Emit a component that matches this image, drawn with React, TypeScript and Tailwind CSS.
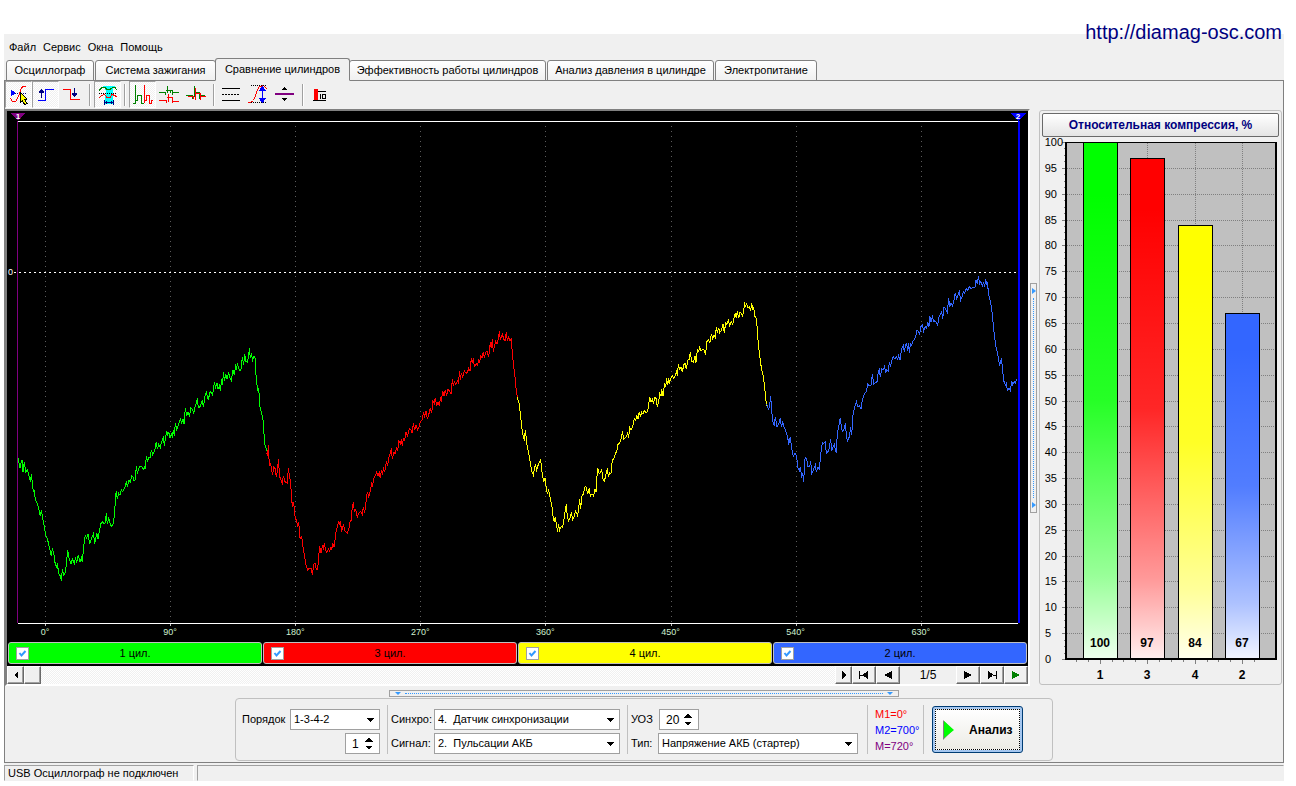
import type { ReactNode } from "react";

type Cylinder = {
  id: number;
  name: string;
  color: string;
  tone: string;
  value: number;
  origin: [number, number];
  trace: string;
};

// Traces are stored in third-pixel units relative to their own origin.
const cylinders: Cylinder[] = [
  {
    id: 1,
    name: "1 цил.",
    color: "#00ff00",
    tone: "bg-[#00ff00]",
    value: 100,
    origin: [-7, 219],
    trace:
      "54,385 57,400 60,415 63,400 66,390 69,425 73,395 77,425 82,420 86,432 91,455 94,433 100,485 103,483 106,508 113,525 118,545 121,558 124,540 128,565 133,590 137,615 143,630 148,652 154,678 157,655 162,675 166,705 170,712 172,700 176,730 181,738 184,752 187,718 191,735 195,730 199,705 203,660 208,688 213,703 217,687 223,700 226,685 230,697 235,675 240,695 244,683 247,697 251,650 256,615 259,625 264,613 269,643 275,625 280,612 284,638 287,630 290,608 294,628 299,598 303,580 308,576 312,580 316,578 319,549 322,583 326,565 332,585 335,590 340,580 344,550 346,505 349,483 352,508 356,490 360,495 364,480 368,485 372,478 376,468 379,453 382,470 387,450 391,456 395,438 399,440 402,452 406,450 409,408 412,432 416,415 420,410 425,409 430,417 433,411 436,418 439,377 443,395 447,380 450,385 454,360 458,374 464,363 469,335 472,358 476,343 481,352 485,335 490,323 493,347 497,320 500,303 503,315 506,305 510,325 514,313 517,320 520,300 523,318 526,280 530,298 535,285 541,267 545,278 549,268 552,282 556,235 560,258 564,246 569,258 572,233 577,238 581,250 585,230 589,220 592,205 595,233 600,230 607,210 610,232 615,198 619,187 625,210 630,185 635,190 638,195 643,157 647,172 651,160 654,178 658,168 661,182 665,148 668,165 670,127 674,152 677,132 681,148 686,127 690,145 694,153 699,120 703,135 707,103 710,120 712,98 716,115 720,122 724,115 727,80 731,105 734,73 738,95 742,97 746,80 748,55 751,85 754,70 758,90 762,78 765,85 769,150 773,180 776,175 780,230 785,250 789,270 791,300 795,345 800,360 802,365",
  },
  {
    id: 3,
    name: "3 цил.",
    color: "#ff0000",
    tone: "bg-[#ff0000]",
    value: 97,
    origin: [243, 209],
    trace:
      "50,400 53,405 55,375 58,435 62,430 65,450 68,465 71,440 75,445 79,470 83,450 85,418 89,470 93,480 97,490 100,468 105,485 112,490 115,445 118,465 122,490 125,540 128,562 131,545 134,585 140,605 143,620 146,605 150,655 155,650 159,680 164,710 168,735 173,750 178,745 184,745 187,765 191,733 195,730 199,748 203,748 206,710 209,678 213,700 217,678 220,685 223,670 227,692 231,697 236,687 239,693 243,680 245,690 248,668 253,682 257,640 262,620 266,603 269,615 271,603 275,635 280,615 286,635 292,640 297,625 300,605 304,600 306,570 310,545 313,575 317,568 322,592 326,580 332,575 337,583 340,560 344,580 348,545 352,515 356,530 361,513 365,490 368,497 371,475 376,467 380,457 384,467 388,457 391,475 394,450 398,465 400,440 404,457 409,425 413,435 417,410 421,400 424,385 427,418 431,398 436,400 440,380 443,393 447,362 451,370 454,358 457,377 460,355 464,362 468,335 472,350 478,325 483,330 487,340 490,310 494,330 498,315 503,330 508,318 512,303 517,300 520,277 524,290 528,273 532,295 536,285 541,263 545,280 549,242 553,250 556,233 560,257 564,245 568,257 571,235 574,242 578,213 582,228 586,210 590,228 594,208 600,215 603,223 607,178 610,197 613,185 617,193 620,188 622,182 626,190 628,154 631,180 634,160 638,172 643,152 648,160 653,155 656,145 660,152 664,115 667,130 670,115 673,140 679,130 683,137 686,117 689,130 692,105 696,115 700,95 703,115 707,98 711,93 716,110 721,67 724,85 727,58 730,95 734,75 737,65 741,72 745,58 748,33 751,60 757,42 761,57 765,62 769,37 772,62 776,50 780,62 784,58 787,100 791,140 795,170 799,215 803,232",
  },
  {
    id: 4,
    name: "4 цил.",
    color: "#ffff00",
    tone: "bg-[#ffff00]",
    value: 84,
    origin: [503, 179],
    trace:
      "22,322 27,340 31,370 35,410 40,440 43,452 46,420 51,465 57,495 62,525 66,545 70,555 76,523 80,540 86,520 92,508 96,545 101,577 105,563 109,595 112,612 116,600 121,625 126,650 130,685 133,695 136,680 139,705 143,725 145,703 149,720 153,710 158,712 163,680 169,643 172,680 176,692 180,683 184,667 188,688 193,678 197,663 203,678 206,655 209,628 212,658 215,620 220,612 225,590 229,592 233,612 238,595 241,618 246,612 251,618 255,598 258,607 260,570 263,533 267,550 271,548 275,540 279,567 283,573 287,558 292,535 295,560 299,548 303,550 307,510 312,505 317,490 321,480 324,463 328,460 331,453 335,440 337,423 341,448 346,443 350,440 353,427 356,443 359,413 363,420 368,410 373,385 377,392 380,375 384,388 388,365 391,380 395,367 399,372 403,362 408,367 413,365 416,345 419,322 423,335 427,327 430,342 434,322 438,325 442,352 446,335 449,310 453,318 455,298 459,318 464,280 467,292 470,265 473,285 476,265 479,277 483,265 487,257 491,265 495,258 499,245 502,257 505,223 509,237 513,230 517,247 521,225 525,220 529,238 533,210 538,208 541,187 545,213 550,217 555,197 558,218 562,180 566,185 569,172 573,182 578,178 583,180 587,195 590,155 595,150 600,157 604,132 608,145 612,135 616,142 619,112 622,128 626,113 629,128 634,122 639,103 643,128 647,98 651,103 655,92 659,107 664,95 668,103 672,85 676,70 679,85 682,62 686,85 690,65 695,72 698,78 702,55 703,37 706,50 710,42 714,53 718,50 722,62 725,40 729,60 731,50 734,78 738,85 742,115 745,165 750,205 755,240 760,260 764,290 767,325 770,345 772,345",
  },
  {
    id: 2,
    name: "2 цил.",
    color: "#3366ff",
    tone: "bg-[#3366ff]",
    value: 67,
    origin: [753, 149],
    trace:
      "20,433 26,448 29,435 32,408 35,455 39,485 43,497 46,470 51,500 56,492 61,473 64,500 68,487 72,500 78,515 83,530 86,555 91,530 95,565 100,590 105,580 110,590 114,625 118,633 121,622 125,648 128,640 131,665 134,605 136,590 141,603 144,620 149,620 152,602 155,640 160,630 166,615 169,637 174,620 178,627 182,585 187,548 191,550 196,545 199,580 204,575 208,563 212,538 215,572 219,560 223,552 227,573 229,575 232,520 236,502 241,473 244,502 247,513 252,508 256,490 260,535 263,542 268,530 272,500 275,525 279,465 283,445 289,425 293,440 298,437 303,447 307,420 310,410 315,400 319,395 323,372 328,378 333,375 337,343 341,372 346,368 351,365 354,342 358,325 361,352 365,327 370,328 374,318 377,340 380,330 385,333 388,305 392,317 396,300 400,290 405,298 409,290 413,297 416,287 420,300 425,265 430,255 433,275 437,255 440,250 443,273 446,250 448,280 451,250 455,257 458,243 463,240 467,230 471,210 476,215 479,225 482,200 487,195 491,213 495,200 500,205 503,187 507,200 509,168 513,185 517,170 521,185 525,182 530,190 533,195 537,170 541,162 545,155 548,178 552,140 557,147 562,157 566,115 569,142 573,130 577,137 581,125 586,98 590,115 594,105 598,95 602,120 606,110 610,95 614,100 619,85 623,92 628,80 632,85 638,83 645,82 648,60 652,72 655,48 659,70 662,65 667,78 671,68 674,82 677,57 680,75 682,67 686,103 690,120 695,145 699,185 703,225 708,260 713,280 716,300 719,318 724,295 728,330 731,362 736,375 739,370 742,390 747,385 751,393 755,362 758,373 762,365 766,370 770,357",
  },
];

const tabs = [
  { label: "Осциллограф", className: "w-[88px] mr-px" },
  { label: "Система зажигания", className: "w-[121px] -mr-px" },
  { label: "Сравнение цилиндров", className: "w-[135px] -mr-px", active: true },
  { label: "Эффективность работы цилиндров", className: "w-[197px] mr-px" },
  { label: "Анализ давления в цилиндре", className: "w-[167px] mr-px" },
  { label: "Электропитание", className: "w-[102px]" },
];

function ToolButton({ label, pressed = false, children }: { label: string; pressed?: boolean; children: ReactNode }) {
  return (
    <button
      type="button"
      aria-label={label}
      title={label}
      aria-pressed={pressed}
      className={
        pressed
          ? "h-[27px] w-[27px] border border-b-white border-l-[#a0a0a0] border-r-white border-t-[#a0a0a0] bg-[repeating-conic-gradient(#ffffff_0_25%,#f0f0f0_0_50%)] bg-[length:2px_2px]"
          : "h-[27px] w-[27px] border border-transparent"
      }
    >
      <svg viewBox="1 1 25 25" width="25" height="25" fill="none" shapeRendering="crispEdges">
        {children}
      </svg>
    </button>
  );
}

function ToolDivider() {
  return (
    <div className="flex w-2 justify-center">
      <div className="h-[22px] w-0.5 border-r border-white bg-[#a0a0a0]" />
    </div>
  );
}

function Toolbar() {
  return (
    <div className="flex h-7 items-start">
      <ToolButton label="Курсор" pressed>
        <path d="M6 8.5L11 12L6 15.5z" fill="#0000ff" />
        <path d="M10 12.5H22" stroke="#000080" strokeDasharray="1 1" />
        <path d="M5.5 17.5L7.5 20.5H10.5L12.5 17.5L14.5 12.5L16.5 6.5L18.5 5.5H21" stroke="#ff0000" />
        <path d="M15.5 11.5L22 18L19.5 18.5L22 22.5L20 24L17.5 20L15.5 21.5z" fill="#ffff00" stroke="#000" />
      </ToolButton>
      <ToolButton label="Фронт" pressed>
        <path d="M6 19.5H13.5V8.5H22" stroke="#0000ff" />
        <path d="M9.5 8V17M8.5 9V12M10.5 9V12M7.5 10V12M11.5 10V12" stroke="#000080" />
      </ToolButton>
      <ToolButton label="Спад">
        <path d="M4 8.5H11.5V18.5H21" stroke="#ff0000" />
        <path d="M15.5 7V16M14.5 12V15M16.5 12V15M13.5 12V14M17.5 12V14" stroke="#000080" />
      </ToolButton>
      <div className="flex h-7 items-center"><ToolDivider /></div>
      <ToolButton label="Окно" pressed>
        <path d="M9 5H21L18.5 9V15L19 17V23H11V17L11.5 15V9z" fill="#00ffff" />
        <path d="M5 9.5L8 6.5H11L13 8.5H16L18.5 6.5H21L23.5 9.5" stroke="#008000" />
        <path d="M5 12.5H23" stroke="#000" strokeDasharray="1 1" />
        <path d="M5 16.5L8 14.5L10.5 13.5L13 16.5H16L18 13.5L21 14.5L23.5 16.5" stroke="#ff0000" />
        <path d="M10 21.5H20M10.5 19V24M19.5 19V24M12.5 20V23M17.5 20V23" stroke="#000080" />
      </ToolButton>
      <div className="flex h-7 items-center"><ToolDivider /></div>
      <ToolButton label="Последовательно" pressed>
        <path d="M4 22.5H6.5V4M6.5 19.5H8.5V14.5H12.5V22.5H14.5" stroke="#008000" />
        <path d="M15.5 22V4M15.5 19.5H17.5V14.5H20.5V22.5H22.5V19.5H24" stroke="#ff0000" />
      </ToolButton>
      <ToolButton label="Раздельно">
        <path d="M3 11.5H9.5V14M11.5 5V12M9.5 9.5H16.5V14M14.5 9V12M16.5 11.5H23" stroke="#008000" />
        <path d="M3 19.5H10.5V22M12.5 13V21M10.5 16.5H16.5V22M16.5 20.5H23" stroke="#ff0000" />
      </ToolButton>
      <ToolButton label="Наложение">
        <path d="M3 14.5H9.5V18M11.5 5V16M11.5 11.5H16.5V18M16.5 14.5H22" stroke="#008000" />
        <path d="M5 15.5H10.5V18M12.5 7V19M12.5 12.5H17.5V19M17.5 15.5H23" stroke="#ff0000" />
      </ToolButton>
      <div className="flex h-7 items-center"><ToolDivider /></div>
      <ToolButton label="Линии">
        <path d="M4 7.5H22M4 19.5H22" stroke="#000" />
        <path d="M4 13.5H22" stroke="#000" strokeDasharray="2 1" />
      </ToolButton>
      <ToolButton label="Масштаб по вертикали">
        <path d="M3 21.5H6L8.5 19.5L10.5 14.5L12.5 8.5L14.5 5.5L18.5 4.5L22.5 8.5" stroke="#ff0000" />
        <path d="M6 4.5H22M6 21.5H22" stroke="#000" strokeDasharray="1 1" />
        <path d="M17.5 6V21" stroke="#0000ff" />
        <path d="M17.5 5L21.5 10H13.5zM17.5 22L13.5 17H21.5z" fill="#0000ff" />
      </ToolButton>
      <ToolButton label="Положение нуля">
        <path d="M3 13H22" stroke="#800080" strokeWidth="2" />
        <path d="M12.5 6L15.5 9H9.5zM12.5 20L9.5 17H15.5z" fill="#000" />
      </ToolButton>
      <div className="flex h-7 items-center"><ToolDivider /></div>
      <ToolButton label="Гистограмма">
        <path d="M7 8H11V19H7z" fill="#ff0000" />
        <path d="M6 19.5H19M11 10.5H19" stroke="#000" />
        <path d="M13.5 13V18M15.5 13.5H18.5V17.5H15.5z" stroke="#000" />
      </ToolButton>
    </div>
  );
}

const degrees = [0, 90, 180, 270, 360, 450, 540, 630];

function Waveform() {
  return (
    <svg viewBox="0 0 1021 531" className="block h-0 w-full flex-1 bg-black" role="img" aria-label="Пульсации АКБ">
      <g shapeRendering="crispEdges" fill="none">
        {degrees.map((deg) => {
          const x = 38.5 + Math.round((deg / 90) * 125.1);
          return (
            <g key={deg}>
              <path d={`M${x} 15V511`} stroke="#5c5c5c" strokeDasharray="1 4" />
              <path d={`M${x} 512V515`} stroke="#c0c0c0" />
            </g>
          );
        })}
        <path d="M11 10.5H1011M11 512.5H1011" stroke="#fff" />
        <path d="M7 161.5H1011" stroke="#fff" strokeDasharray="2 3" />
        <path d="M10.5 10V512" stroke="#800080" />
        <path d="M3 2H18L11 10z" fill="#800080" />
        {cylinders.map((cylinder) => (
          <g
            key={cylinder.id}
            transform={`translate(${cylinder.origin[0]} ${cylinder.origin[1]}) scale(${1 / 3})`}
          >
            <polyline points={cylinder.trace} stroke={cylinder.color} strokeWidth="3" />
          </g>
        ))}
        <path d="M1011.5 10V512" stroke="#0000ff" strokeWidth="2" />
        <path d="M1004 2H1019L1011.5 10z" fill="#0000ff" />
      </g>
      <g className="font-['Liberation_Sans'] text-[9px]">
        <text x="11" y="8" textAnchor="middle" fill="#fff" className="text-[8px] font-bold">1</text>
        <text x="1011" y="8" textAnchor="middle" fill="#fff" className="text-[8px] font-bold">2</text>
        <text x="1" y="164" fill="#fff">0</text>
        {degrees.map((deg) => (
          <text key={deg} x={38 + (deg / 90) * 125.1} y="524" textAnchor="middle" fill="#d0f0d0">
            {deg}°
          </text>
        ))}
      </g>
    </svg>
  );
}

function CylinderBar() {
  return (
    <div className="grid grid-cols-4 gap-px bg-black px-px pb-0.5">
      {cylinders.map((cylinder) => (
        <label
          key={cylinder.id}
          className={`relative flex h-[22px] items-center justify-center rounded-[3px] border border-[#c0c0c0] text-[11px] leading-none ${cylinder.tone}`}
        >
          <span className="absolute left-[7px] top-1 block h-[13px] w-[13px]">
            <input
              type="checkbox"
              defaultChecked
              className="peer block h-[13px] w-[13px] appearance-none border border-[#a0a0a0] bg-white"
            />
            <svg viewBox="0 0 13 13" className="pointer-events-none absolute inset-0 hidden peer-checked:block">
              <path d="M3.5 6L5.5 8.5L9.5 4" fill="none" stroke="#3399ff" strokeWidth="2" />
            </svg>
          </span>
          {cylinder.name}
        </label>
      ))}
    </div>
  );
}

function ScrollButton({ label, wide = false, children }: { label: string; wide?: boolean; children?: ReactNode }) {
  return (
    <button
      type="button"
      aria-label={label}
      className={`flex h-[18px] shrink-0 items-center justify-center border border-b-[#696969] border-l-white border-r-[#696969] border-t-white bg-[#f0f0f0] shadow-[inset_-1px_-1px_0_#a0a0a0] ${wide ? "w-6" : "w-[17px]"}`}
    >
      <svg viewBox="0 0 12 10" width="12" height="10" shapeRendering="crispEdges">
        {children}
      </svg>
    </button>
  );
}

function ScrollRow() {
  return (
    <div className="flex h-[18px] bg-[#f0f0f0]">
      <ScrollButton label="Влево">
        <path d="M8 1V9L4 5z" />
      </ScrollButton>
      <ScrollButton label="Ползунок" />
      <div className="flex-1 bg-[repeating-conic-gradient(#ffffff_0_25%,#f0f0f0_0_50%)] bg-[length:2px_2px]" />
      <ScrollButton label="Вправо">
        <path d="M4 1V9L8 5z" />
      </ScrollButton>
      <ScrollButton label="Первый кадр" wide>
        <path d="M1 1H2V9H1zM10 1V9L4 5zM2 4.5H6V5.5H2z" />
      </ScrollButton>
      <ScrollButton label="Предыдущий кадр" wide>
        <path d="M10 1V9L2 5z" />
      </ScrollButton>
      <span className="w-14 text-center text-[12px] leading-[18px]">1/5</span>
      <ScrollButton label="Следующий кадр" wide>
        <path d="M2 1V9L10 5z" />
      </ScrollButton>
      <ScrollButton label="Последний кадр" wide>
        <path d="M2 1V9L8 5zM10 1H11V9H10zM6 4.5H10V5.5H6z" />
      </ScrollButton>
      <ScrollButton label="Воспроизвести" wide>
        <path d="M2 1V9L10 5z" fill="#008000" />
      </ScrollButton>
    </div>
  );
}

function CompressionChart() {
  const y = (value: number) => Math.round(522 - value * 5.17);
  return (
    <svg viewBox="0 0 241 547" className="block h-0 w-full flex-1" role="img" aria-label="Относительная компрессия">
      <defs>
        <linearGradient id="fade" x1="0" y1="0" x2="0" y2="1">
          <stop offset="0.1" stopColor="#fff" stopOpacity="0" />
          <stop offset="0.5" stopColor="#fff" stopOpacity="0.15" />
          <stop offset="0.84" stopColor="#fff" stopOpacity="0.6" />
          <stop offset="1" stopColor="#fff" stopOpacity="0.93" />
        </linearGradient>
      </defs>
      <g shapeRendering="crispEdges">
        <rect x="26" y="5" width="210" height="517" fill="#c0c0c0" />
        {Array.from({ length: 21 }, (_, i) => (
          <g key={i}>
            <path d={`M22 ${y(i * 5) + 0.5}H26`} stroke="#808080" />
            {i < 20 && [1, 2, 3].map((k) => (
              <path key={k} d={`M24 ${y(i * 5 + k * 1.25) + 0.5}H26`} stroke="#808080" />
            ))}
            <path d={`M27 ${y(i * 5) + 0.5}H235`} stroke="#808080" strokeDasharray="1 1" />
          </g>
        ))}
        {cylinders.map((cylinder, i) => {
          const x = 43 + Math.round(i * 47.3);
          const top = y(cylinder.value);
          return (
            <g key={cylinder.id}>
              <path d={`M${x + 17.5} 6V522`} stroke="#808080" strokeDasharray="1 1" />
              <path d={`M${x + 17.5} 523V527M${x + 5.5} 523V525M${x - 6.5} 523V525M${x + 29.5} 523V525`} stroke="#808080" />
              <rect x={x} y={top} width="35" height={522 - top} fill={cylinder.color} />
              <rect x={x + 0.5} y={top + 0.5} width="34" height={521 - top} fill="url(#fade)" stroke="#000" />
            </g>
          );
        })}
        <path d="M26 5.5H236" stroke="#000" />
        <path d="M26 5V523M236 5V523M25 522H237" stroke="#000" strokeWidth="2" />
      </g>
      <g className="font-['Liberation_Sans'] text-[11px]" fill="#000">
        {Array.from({ length: 21 }, (_, i) => (
          <text
            key={i}
            x={i === 20 ? 23 : i < 2 ? 11 : 17}
            y={y(i * 5) + 4}
            textAnchor="end"
          >
            {i * 5}
          </text>
        ))}
      </g>
      <g className="font-['Liberation_Sans'] text-[12px] font-bold" fill="#000" textAnchor="middle">
        {cylinders.map((cylinder, i) => (
          <g key={cylinder.id}>
            <text x={60 + Math.round(i * 47.3)} y="510">{cylinder.value}</text>
            <text x={60 + Math.round(i * 47.3)} y="542">{cylinder.id}</text>
          </g>
        ))}
      </g>
    </svg>
  );
}

function Select({ label, value, className }: { label: string; value: string; className: string }) {
  return (
    <span className={`relative block h-[21px] ${className}`}>
      <select
        aria-label={label}
        defaultValue={value}
        className="block h-full w-full appearance-none border border-[#a0a0a0] bg-white pl-[3px] pr-4 text-[11px] leading-none"
      >
        <option value={value}>{value}</option>
      </select>
      <svg viewBox="0 0 8 4" className="pointer-events-none absolute right-[6px] top-[9px] h-1 w-2" shapeRendering="crispEdges">
        <path d="M0 0H8L4 4z" />
      </svg>
    </span>
  );
}

function Spinner({ label, value, className }: { label: string; value: number; className: string }) {
  return (
    <span className={`flex h-[21px] border border-[#a0a0a0] bg-white ${className}`}>
      <input
        aria-label={label}
        defaultValue={value}
        className="block w-full min-w-0 flex-1 bg-white pl-1.5 text-[12px] leading-none"
      />
      <span className="flex w-4 shrink-0 flex-col items-center justify-center gap-[3px] pr-1">
        <button type="button" aria-label={`${label}: больше`} className="block h-[5px] w-2">
          <svg viewBox="0 0 8 5" className="block h-full w-full" shapeRendering="crispEdges"><path d="M4 0L8 4.5H0z" /></svg>
        </button>
        <button type="button" aria-label={`${label}: меньше`} className="block h-[5px] w-2">
          <svg viewBox="0 0 8 5" className="block h-full w-full" shapeRendering="crispEdges"><path d="M4 5L0 0.5H8z" /></svg>
        </button>
      </span>
    </span>
  );
}

function Divider({ className }: { className: string }) {
  return <div className={`h-[49px] w-px bg-[#c0c0c0] ${className}`} />;
}

function SettingsPanel() {
  return (
    <div className="mx-auto mt-px flex h-[63px] w-[818px] items-center rounded-[4px] border border-[#c0c0c0] pl-1.5 text-[11px] leading-none">
      <div className="flex flex-col items-end gap-[3px] pt-1">
        <div className="flex items-center">
          <span className="w-12">Порядок</span>
          <Select label="Порядок" value="1-3-4-2" className="w-[90px]" />
        </div>
        <Spinner label="Номер" value={1} className="w-[35px]" />
      </div>
      <Divider className="ml-[7px] mr-[3px]" />
      <div className="flex flex-col gap-[3px] pt-1">
        <div className="flex items-center">
          <span className="w-[43px]">Синхро:</span>
          <Select label="Синхро" value={"4.\u00a0\u00a0Датчик синхронизации"} className="w-[186px]" />
        </div>
        <div className="flex items-center">
          <span className="w-[43px]">Сигнал:</span>
          <Select label="Сигнал" value={"2.\u00a0\u00a0Пульсации АКБ"} className="w-[186px]" />
        </div>
      </div>
      <Divider className="ml-[7px] mr-[3px]" />
      <div className="flex flex-col gap-[3px] pt-1">
        <div className="flex items-center">
          <span className="w-7">УОЗ</span>
          <Spinner label="УОЗ" value={20} className="w-10" />
        </div>
        <div className="flex items-center">
          <span className="w-[27px]">Тип:</span>
          <Select label="Тип" value="Напряжение АКБ (стартер)" className="w-[200px]" />
        </div>
      </div>
      <Divider className="ml-[9px] mr-[7px]" />
      <div className="w-12 text-[11px] leading-4">
        <div className="text-[#ff0000]">M1=0°</div>
        <div className="text-[#0000ff]">M2=700°</div>
        <div className="text-[#800080]">M=720°</div>
      </div>
      <Divider className="mr-2" />
      <button
        type="button"
        className="h-[47px] w-[91px] rounded-[3px] border border-[#003c74] bg-[#a5c7f0] p-0.5 text-[12px] font-bold"
      >
        <span className="flex h-full items-center gap-[15px] border border-dotted border-black bg-gradient-to-b from-white to-[#ecebe5] pl-[7px]">
          <svg viewBox="0 0 11 20" width="11" height="20">
            <path d="M0 0L10 10L0 20z" fill="#808080" />
            <path d="M1 1L11 10L1 18z" fill="#00ff00" />
          </svg>
          Анализ
        </span>
      </button>
    </div>
  );
}

export default function App() {
  return (
    <div className="relative flex min-h-screen flex-col bg-white pb-[5px] pl-1 pr-3 pt-[34px] font-['Liberation_Sans',Arial,sans-serif] text-black">
      <a href="http://diamag-osc.com" className="absolute right-[14px] top-5 text-[20px] leading-6 text-[#000080]">
        http://diamag-osc.com
      </a>
      <div className="flex flex-1 flex-col bg-[#f0f0f0]">
        <nav className="flex h-6 items-center gap-[7px] pl-[5px] pt-0.5 text-[11px] leading-none">
          <button type="button">Файл</button>
          <button type="button">Сервис</button>
          <button type="button">Окна</button>
          <button type="button">Помощь</button>
        </nav>
        <div role="tablist" className="z-10 -mb-px flex h-[23px] items-end pl-0.5 text-[11px]">
          {tabs.map((tab) => (
            <button
              key={tab.label}
              type="button"
              role="tab"
              aria-selected={!!tab.active}
              className={`shrink-0 whitespace-nowrap rounded-t-[3px] border border-[#808080] leading-none ${
                tab.active ? "z-10 h-[23px] border-b-[#f0f0f0] bg-[#f0f0f0] pb-px" : "h-[21px] bg-gradient-to-b from-white to-[#f0f0f0]"
              } ${tab.className}`}
            >
              {tab.label}
            </button>
          ))}
        </div>
        <main className="flex flex-1 flex-col border border-[#808080]">
          <Toolbar />
          <div className="flex flex-1">
            <section className="flex min-h-[400px] min-w-0 flex-1 flex-col border-2 border-b-white border-l-[#808080] border-r-white border-t-[#808080]">
              <Waveform />
              <CylinderBar />
              <ScrollRow />
            </section>
            <div className="mr-0.5 flex items-center">
              <div className="flex h-[230px] w-[7px] flex-col items-center justify-between border border-[#a0a0a0] py-1">
                <svg viewBox="0 0 4 6" width="4" height="6"><path d="M0 0L4 3L0 6z" fill="#3399ff" /></svg>
                <div className="my-1 flex-1 border-l border-dotted border-[#3399ff]" />
                <svg viewBox="0 0 4 6" width="4" height="6"><path d="M0 0L4 3L0 6z" fill="#3399ff" /></svg>
              </div>
            </div>
            <section className="my-px mr-px flex w-[243px] shrink-0 flex-col rounded-[3px] border border-[#c0c0c0]">
              <button
                type="button"
                className="mx-0.5 mt-0.5 h-6 rounded-[2px] border border-[#696969] bg-gradient-to-b from-white to-[#e4e4e4] text-[12px] font-bold leading-none text-[#000080]"
              >
                Относительная компрессия, %
              </button>
              <CompressionChart />
            </section>
          </div>
          <div className="h-[76px] pt-1">
            <div className="mx-auto flex h-[7px] w-[510px] items-center justify-between border border-[#a0a0a0] px-[5px]">
              <svg viewBox="0 0 6 3" width="6" height="3"><path d="M0 0H6L3 3z" fill="#3399ff" /></svg>
              <div className="mx-1 flex-1 border-t border-dotted border-[#3399ff]" />
              <svg viewBox="0 0 6 3" width="6" height="3"><path d="M0 0H6L3 3z" fill="#3399ff" /></svg>
            </div>
            <SettingsPanel />
          </div>
        </main>
        <footer className="mt-0.5 flex h-4 gap-[3px] text-[11px] leading-none">
          <div className="flex w-[190px] items-center border border-b-transparent border-l-[#a0a0a0] border-r-white border-t-[#a0a0a0] pl-[3px]">
            USB Осциллограф не подключен
          </div>
          <div className="flex-1 border border-b-transparent border-l-[#a0a0a0] border-r-transparent border-t-[#a0a0a0]" />
        </footer>
      </div>
    </div>
  );
}
